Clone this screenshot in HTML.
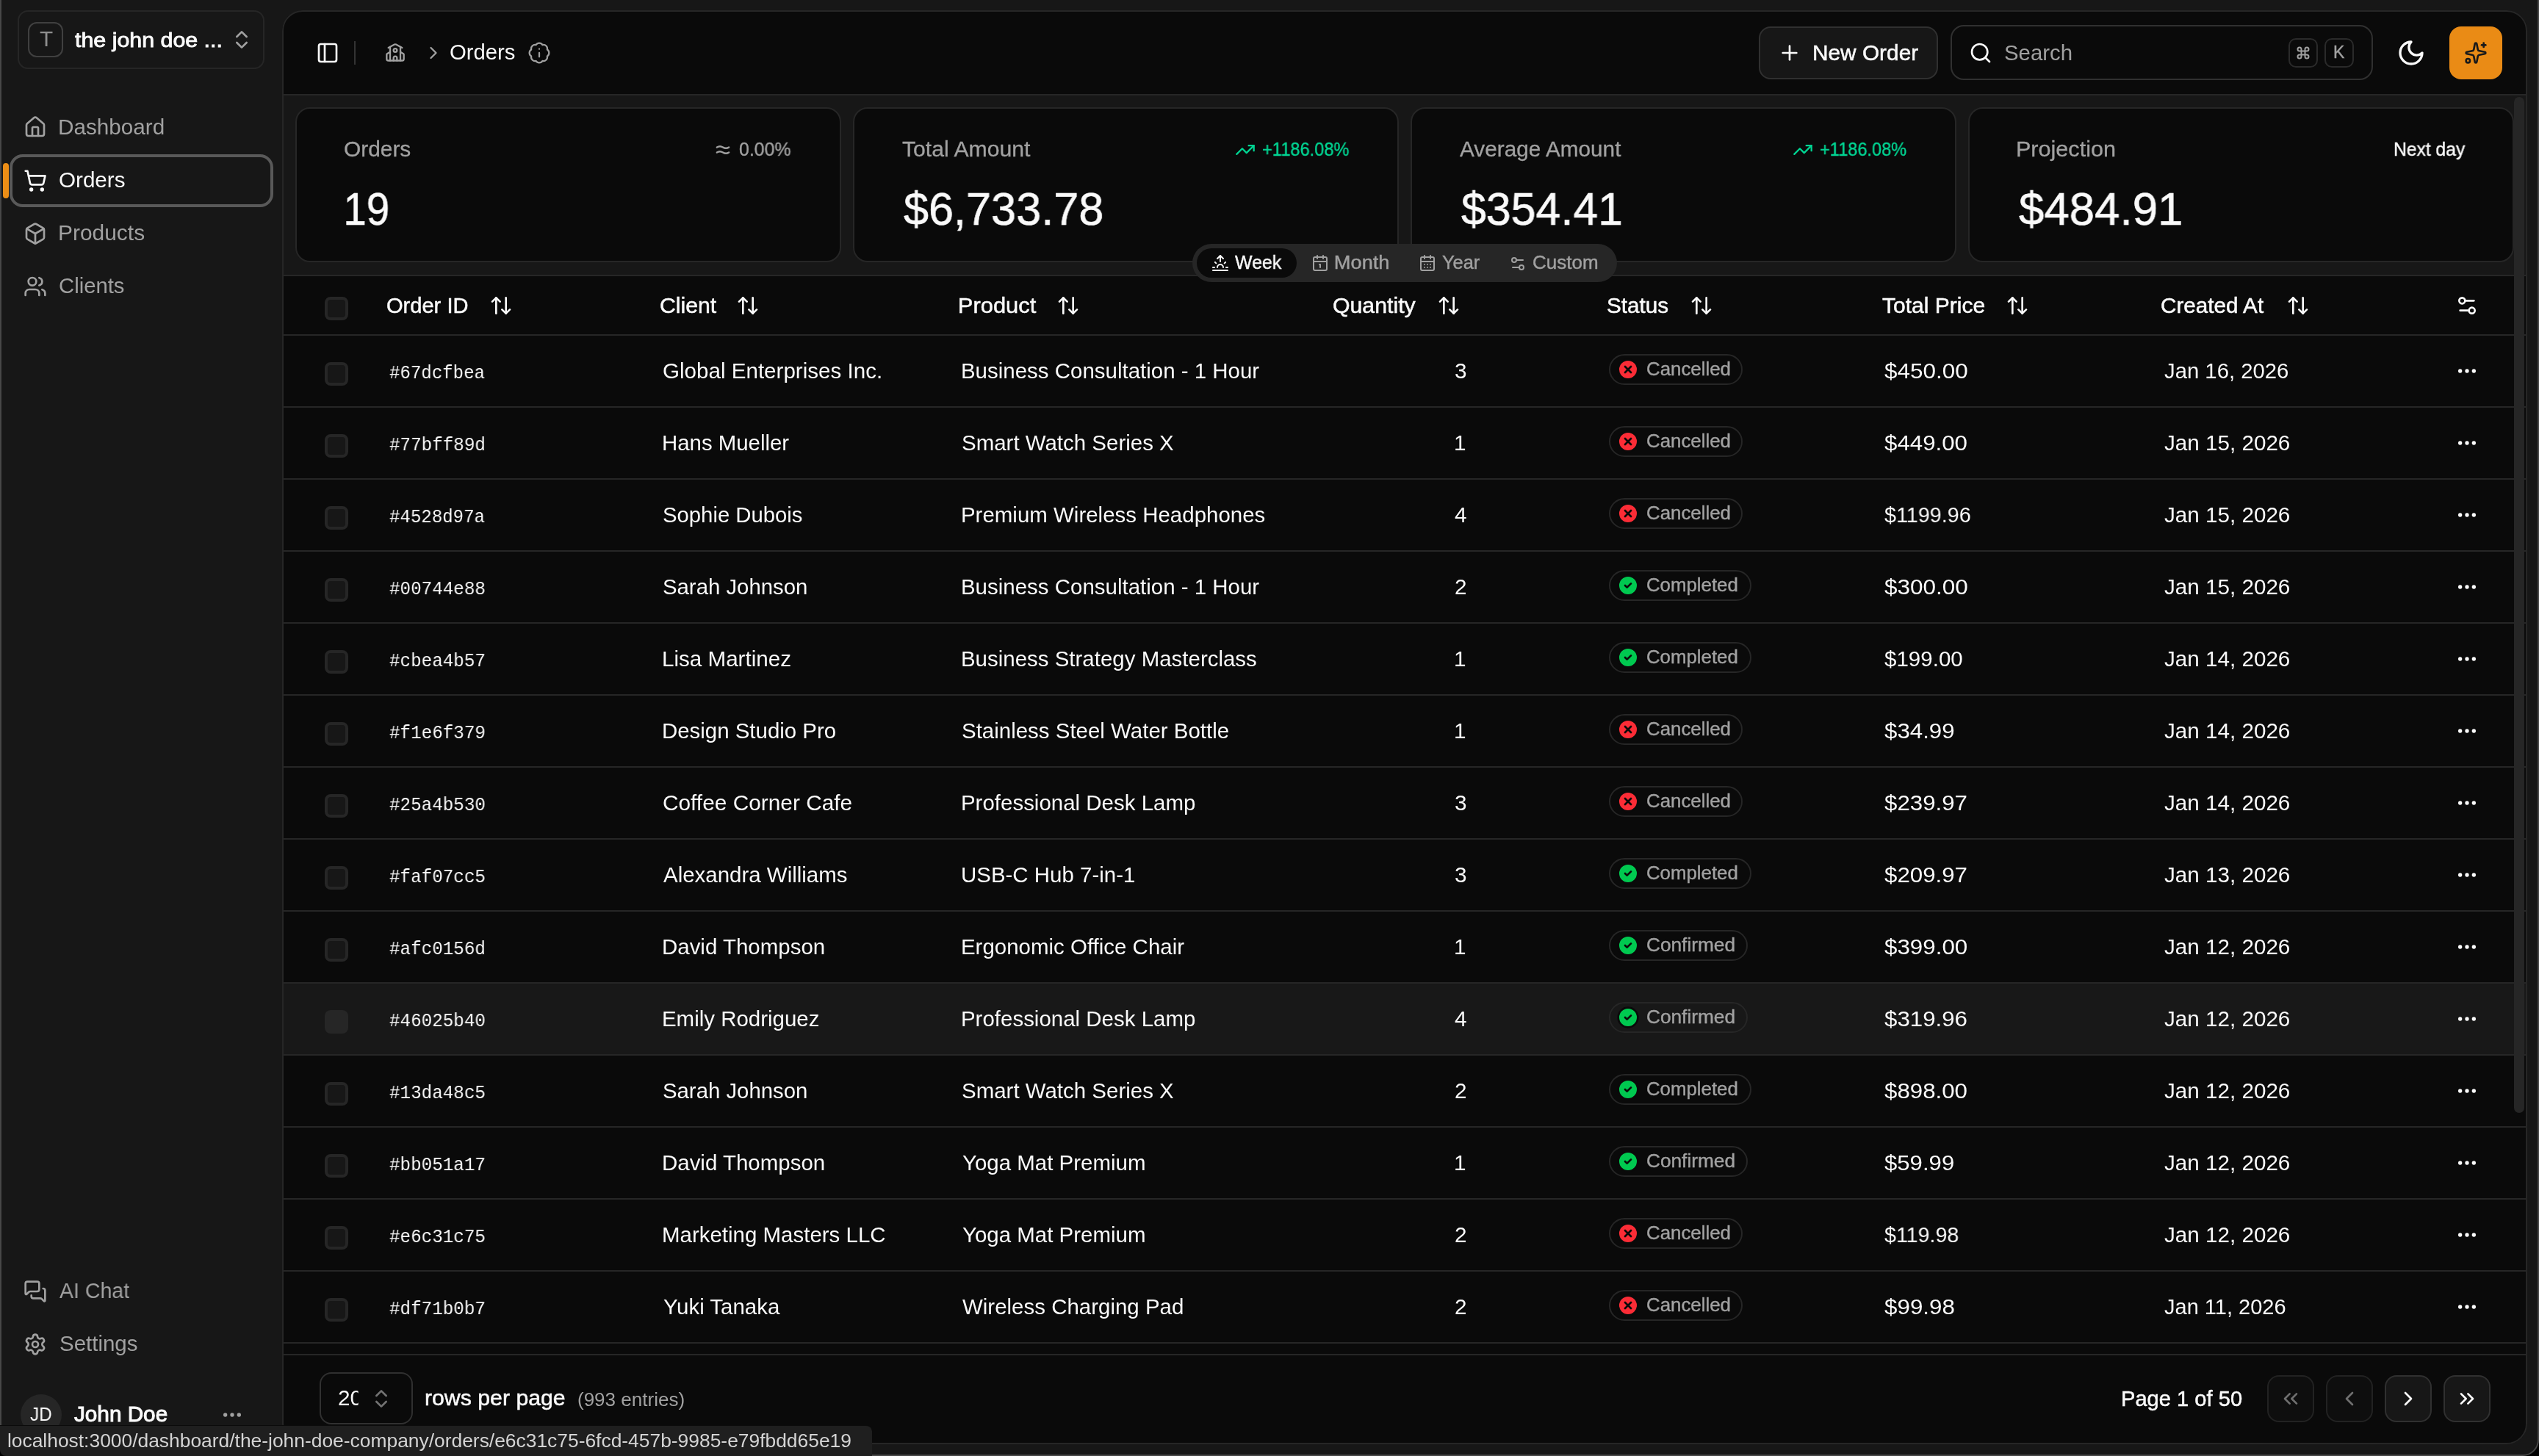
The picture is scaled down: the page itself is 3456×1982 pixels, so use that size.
<!DOCTYPE html>
<html><head><meta charset="utf-8"><title>Orders</title>
<style>
html,body{margin:0;padding:0;}
body{width:3456px;height:1982px;overflow:hidden;position:relative;background:#000;font-family:'Liberation Sans', sans-serif;}
.a{position:absolute;}
.t{white-space:pre;will-change:transform;}
</style></head><body>
<div class="a" style="left:0px;top:-40px;width:3456px;height:2022px;background:#171717;border:2px solid #474747;border-radius:22px;box-sizing:border-box;"></div>
<div class="a" style="left:24px;top:14px;width:336px;height:80px;border:2px solid #262626;border-radius:14px;box-sizing:border-box;"></div>
<div class="a" style="left:38px;top:30px;width:48px;height:48px;border:2px solid #404040;border-radius:12px;box-sizing:border-box;"></div>
<div class="a t" style="left:54.00px;top:39.45px;font-family:'Liberation Sans', sans-serif;font-size:29px;line-height:29px;font-weight:400;color:#8f8f8f;transform:scaleX(1.0243);transform-origin:0.00px 0;">T</div>
<div class="a t" style="left:102.00px;top:40.60px;font-family:'Liberation Sans', sans-serif;font-size:28px;line-height:28px;font-weight:400;color:#fafafa;transform:scaleX(1.0846);transform-origin:0.00px 0;-webkit-text-stroke:0.9px #fafafa;">the john doe ...</div>
<svg class="a" style="left:313px;top:38px;" width="32" height="32" viewBox="0 0 24 24" fill="none" stroke="#a1a1a1" stroke-width="2" stroke-linecap="round" stroke-linejoin="round"><path d="m7 15 5 5 5-5"/><path d="m7 9 5-5 5 5"/></svg>
<div class="a" style="left:13px;top:210px;width:359px;height:72px;border:4px solid #595959;border-radius:18px;box-sizing:border-box;"></div>
<div class="a" style="left:4px;top:222px;width:8px;height:48px;background:#EC8E16;border-radius:4px;box-sizing:border-box;"></div>
<svg class="a" style="left:32px;top:157px;" width="32" height="32" viewBox="0 0 24 24" fill="none" stroke="#a1a1a1" stroke-width="2" stroke-linecap="round" stroke-linejoin="round"><path d="M15 21v-8a1 1 0 0 0-1-1h-4a1 1 0 0 0-1 1v8"/><path d="M3 10a2 2 0 0 1 .709-1.528l7-5.999a2 2 0 0 1 2.582 0l7 5.999A2 2 0 0 1 21 10v9a2 2 0 0 1-2 2H5a2 2 0 0 1-2-2z"/></svg>
<div class="a t" style="left:79.00px;top:159.45px;font-family:'Liberation Sans', sans-serif;font-size:29px;line-height:29px;font-weight:400;color:#a1a1a1;transform:scaleX(1.0235);transform-origin:2.00px 0;">Dashboard</div>
<svg class="a" style="left:32px;top:230px;" width="32" height="32" viewBox="0 0 24 24" fill="none" stroke="#fafafa" stroke-width="2" stroke-linecap="round" stroke-linejoin="round"><circle cx="8" cy="21" r="1"/><circle cx="19" cy="21" r="1"/><path d="M2.05 2.05h2l2.66 12.42a2 2 0 0 0 2 1.58h9.78a2 2 0 0 0 1.95-1.57l1.65-7.43H5.12"/></svg>
<div class="a t" style="left:80.00px;top:231.45px;font-family:'Liberation Sans', sans-serif;font-size:29px;line-height:29px;font-weight:400;color:#fafafa;transform:scaleX(1.0215);transform-origin:1.00px 0;">Orders</div>
<svg class="a" style="left:32px;top:302px;" width="32" height="32" viewBox="0 0 24 24" fill="none" stroke="#a1a1a1" stroke-width="2" stroke-linecap="round" stroke-linejoin="round"><path d="M21 8a2 2 0 0 0-1-1.73l-7-4a2 2 0 0 0-2 0l-7 4A2 2 0 0 0 3 8v8a2 2 0 0 0 1 1.73l7 4a2 2 0 0 0 2 0l7-4A2 2 0 0 0 21 16Z"/><path d="m3.3 7 8.7 5 8.7-5"/><path d="M12 22V12"/></svg>
<div class="a t" style="left:79.40px;top:303.45px;font-family:'Liberation Sans', sans-serif;font-size:29px;line-height:29px;font-weight:400;color:#a1a1a1;transform:scaleX(1.0327);transform-origin:2.00px 0;">Products</div>
<svg class="a" style="left:32px;top:374px;" width="32" height="32" viewBox="0 0 24 24" fill="none" stroke="#a1a1a1" stroke-width="2" stroke-linecap="round" stroke-linejoin="round"><path d="M16 21v-2a4 4 0 0 0-4-4H6a4 4 0 0 0-4 4v2"/><circle cx="9" cy="7" r="4"/><path d="M22 21v-2a4 4 0 0 0-3-3.87"/><path d="M16 3.13a4 4 0 0 1 0 7.75"/></svg>
<div class="a t" style="left:80.40px;top:375.45px;font-family:'Liberation Sans', sans-serif;font-size:29px;line-height:29px;font-weight:400;color:#a1a1a1;transform:scaleX(1.0098);transform-origin:1.00px 0;">Clients</div>
<svg class="a" style="left:32px;top:1742px;" width="32" height="32" viewBox="0 0 24 24" fill="none" stroke="#a1a1a1" stroke-width="2" stroke-linecap="round" stroke-linejoin="round"><path d="M16 10a2 2 0 0 1-2 2H6.828a2 2 0 0 0-1.414.586l-2.202 2.202A.71.71 0 0 1 2 14.286V4a2 2 0 0 1 2-2h10a2 2 0 0 1 2 2z"/><path d="M20 9a2 2 0 0 1 2 2v10.286a.71.71 0 0 1-1.212.502l-2.202-2.202A2 2 0 0 0 17.172 19H10a2 2 0 0 1-2-2v-1"/></svg>
<div class="a t" style="left:81.00px;top:1743.45px;font-family:'Liberation Sans', sans-serif;font-size:29px;line-height:29px;font-weight:400;color:#a1a1a1;transform:scaleX(0.9829);transform-origin:0.00px 0;">AI Chat</div>
<svg class="a" style="left:32px;top:1814px;" width="32" height="32" viewBox="0 0 24 24" fill="none" stroke="#a1a1a1" stroke-width="2" stroke-linecap="round" stroke-linejoin="round"><path d="M9.671 4.136a2.34 2.34 0 0 1 4.659 0 2.34 2.34 0 0 0 3.319 1.915 2.34 2.34 0 0 1 2.33 4.033 2.34 2.34 0 0 0 0 3.831 2.34 2.34 0 0 1-2.33 4.033 2.34 2.34 0 0 0-3.319 1.915 2.34 2.34 0 0 1-4.659 0 2.34 2.34 0 0 0-3.32-1.915 2.34 2.34 0 0 1-2.33-4.033 2.34 2.34 0 0 0 0-3.831A2.34 2.34 0 0 1 6.35 6.051a2.34 2.34 0 0 0 3.319-1.915"/><circle cx="12" cy="12" r="3"/></svg>
<div class="a t" style="left:80.50px;top:1815.45px;font-family:'Liberation Sans', sans-serif;font-size:29px;line-height:29px;font-weight:400;color:#a1a1a1;transform:scaleX(1.0166);transform-origin:1.00px 0;">Settings</div>
<div class="a" style="left:28px;top:1898px;width:56px;height:56px;background:#262626;border-radius:28px;box-sizing:border-box;"></div>
<div class="a t" style="left:41.00px;top:1911.99px;font-family:'Liberation Sans', sans-serif;font-size:26px;line-height:26px;font-weight:400;color:#fafafa;transform:scaleX(0.9355);transform-origin:0.00px 0;">JD</div>
<div class="a t" style="left:101.00px;top:1911.45px;font-family:'Liberation Sans', sans-serif;font-size:29px;line-height:29px;font-weight:400;color:#fafafa;transform:scaleX(1.0243);transform-origin:0.00px 0;-webkit-text-stroke:1.0px #fafafa;">John Doe</div>
<svg class="a" style="left:300px;top:1910px;" width="32" height="32" viewBox="0 0 24 24" fill="none" stroke="#a1a1a1" stroke-width="2" stroke-linecap="round" stroke-linejoin="round"><circle cx="12" cy="12" r="1"/><circle cx="19" cy="12" r="1"/><circle cx="5" cy="12" r="1"/></svg>
<div class="a" style="left:384px;top:14px;width:3056px;height:1952px;background:#0a0a0a;border-radius:28px;box-sizing:border-box;"></div>
<svg class="a" style="left:430px;top:56px;" width="32" height="32" viewBox="0 0 24 24" fill="none" stroke="#fafafa" stroke-width="2" stroke-linecap="round" stroke-linejoin="round"><rect width="18" height="18" x="3" y="3" rx="2"/><path d="M9 3v18"/></svg>
<div class="a" style="left:482px;top:56px;width:2px;height:32px;background:#333333;box-sizing:border-box;"></div>
<svg class="a" style="left:524px;top:58px;" width="28" height="28" viewBox="0 0 24 24" fill="none" stroke="#a1a1a1" stroke-width="2" stroke-linecap="round" stroke-linejoin="round"><path d="M14 21v-3a2 2 0 0 0-4 0v3"/><path d="M18 5v16"/><path d="m4 6 7.106-3.79a2 2 0 0 1 1.788 0L20 6"/><path d="m6 11-3.52 2.147a1 1 0 0 0-.48.854V19a2 2 0 0 0 2 2h16a2 2 0 0 0 2-2v-5a1 1 0 0 0-.48-.853L18 11"/><path d="M6 5v16"/><circle cx="12" cy="9" r="2"/></svg>
<svg class="a" style="left:576px;top:58px;" width="28" height="28" viewBox="0 0 24 24" fill="none" stroke="#a1a1a1" stroke-width="2" stroke-linecap="round" stroke-linejoin="round"><path d="m9 18 6-6-6-6"/></svg>
<div class="a t" style="left:612.40px;top:57.25px;font-family:'Liberation Sans', sans-serif;font-size:29px;line-height:29px;font-weight:400;color:#fafafa;transform:scaleX(1.0100);transform-origin:1.00px 0;">Orders</div>
<svg class="a" style="left:718px;top:56px;" width="32" height="32" viewBox="0 0 24 24" fill="none" stroke="#a1a1a1" stroke-width="1.7" stroke-linecap="round" stroke-linejoin="round"><path d="M3.85 8.62a4 4 0 0 1 4.78-4.77 4 4 0 0 1 6.74 0 4 4 0 0 1 4.78 4.78 4 4 0 0 1 0 6.74 4 4 0 0 1-4.77 4.78 4 4 0 0 1-6.75 0 4 4 0 0 1-4.78-4.77 4 4 0 0 1 0-6.76Z"/><line x1="12" x2="12" y1="16" y2="12"/><line x1="12" x2="12.01" y1="8" y2="8"/></svg>
<div class="a" style="left:2394px;top:36px;width:244px;height:72px;background:#171717;border:2px solid #303030;border-radius:16px;box-sizing:border-box;"></div>
<svg class="a" style="left:2420px;top:56px;" width="32" height="32" viewBox="0 0 24 24" fill="none" stroke="#fafafa" stroke-width="2" stroke-linecap="round" stroke-linejoin="round"><path d="M5 12h14"/><path d="M12 5v14"/></svg>
<div class="a t" style="left:2467.00px;top:57.65px;font-family:'Liberation Sans', sans-serif;font-size:29px;line-height:29px;font-weight:400;color:#fafafa;transform:scaleX(1.0286);transform-origin:2.00px 0;-webkit-text-stroke:0.5px #fafafa;">New Order</div>
<div class="a" style="left:2655px;top:34px;width:575px;height:75px;background:#0a0a0a;border:2px solid #303030;border-radius:18px;box-sizing:border-box;"></div>
<svg class="a" style="left:2680px;top:56px;" width="32" height="32" viewBox="0 0 24 24" fill="none" stroke="#fafafa" stroke-width="2" stroke-linecap="round" stroke-linejoin="round"><path d="m21 21-4.34-4.34"/><circle cx="11" cy="11" r="8"/></svg>
<div class="a t" style="left:2728.00px;top:58.35px;font-family:'Liberation Sans', sans-serif;font-size:29px;line-height:29px;font-weight:400;color:#a1a1a1;transform:scaleX(1.0139);transform-origin:1.00px 0;">Search</div>
<div class="a" style="left:3115px;top:52px;width:40px;height:40px;border:2px solid #2a2a2a;border-radius:10px;box-sizing:border-box;"></div>
<svg class="a" style="left:3125px;top:62px;" width="20" height="20" viewBox="0 0 24 24" fill="none" stroke="#a1a1a1" stroke-width="2.4" stroke-linecap="round" stroke-linejoin="round"><path d="M15 6v12a3 3 0 1 0 3-3H6a3 3 0 1 0 3 3V6a3 3 0 1 0-3 3h12a3 3 0 1 0-3-3"/></svg>
<div class="a" style="left:3164px;top:52px;width:40px;height:40px;border:2px solid #2a2a2a;border-radius:10px;box-sizing:border-box;"></div>
<div class="a t" style="left:3176.00px;top:60.23px;font-family:'Liberation Sans', sans-serif;font-size:23px;line-height:23px;font-weight:400;color:#a1a1a1;-webkit-text-stroke:0.4px #a1a1a1;">K</div>
<svg class="a" style="left:3262px;top:52px;" width="40" height="40" viewBox="0 0 24 24" fill="none" stroke="#fafafa" stroke-width="2" stroke-linecap="round" stroke-linejoin="round"><path d="M12 3a6 6 0 0 0 9 9 9 9 0 1 1-9-9Z"/></svg>
<div class="a" style="left:3334px;top:36px;width:72px;height:72px;background:#EA8B15;border-radius:16px;box-sizing:border-box;"></div>
<svg class="a" style="left:3354px;top:56px;" width="32" height="32" viewBox="0 0 24 24" fill="none" stroke="#1a1a1a" stroke-width="2" stroke-linecap="round" stroke-linejoin="round"><path d="M11.017 2.814a1 1 0 0 1 1.966 0l1.051 5.558a2 2 0 0 0 1.594 1.594l5.558 1.051a1 1 0 0 1 0 1.966l-5.558 1.051a2 2 0 0 0-1.594 1.594l-1.051 5.558a1 1 0 0 1-1.966 0l-1.051-5.558a2 2 0 0 0-1.594-1.594l-5.558-1.051a1 1 0 0 1 0-1.966l5.558-1.051a2 2 0 0 0 1.594-1.594z"/><path d="M20 2v4"/><path d="M22 4h-4"/><circle cx="4" cy="20" r="2"/></svg>
<div class="a" style="left:386px;top:128px;width:3052px;height:2px;background:#262626;box-sizing:border-box;"></div>
<div class="a" style="left:386px;top:130px;width:3052px;height:244px;background:#171717;box-sizing:border-box;"></div>
<div class="a" style="left:386px;top:374px;width:3052px;height:2px;background:#262626;box-sizing:border-box;"></div>
<div class="a" style="left:402px;top:146px;width:743px;height:211px;background:#0a0a0a;border:2px solid #262626;border-radius:20px;box-sizing:border-box;"></div>
<div class="a" style="left:1161px;top:146px;width:743px;height:211px;background:#0a0a0a;border:2px solid #262626;border-radius:20px;box-sizing:border-box;"></div>
<div class="a" style="left:1920px;top:146px;width:743px;height:211px;background:#0a0a0a;border:2px solid #262626;border-radius:20px;box-sizing:border-box;"></div>
<div class="a" style="left:2679px;top:146px;width:743px;height:211px;background:#0a0a0a;border:2px solid #262626;border-radius:20px;box-sizing:border-box;"></div>
<div class="a t" style="left:467.50px;top:189.45px;font-family:'Liberation Sans', sans-serif;font-size:29px;line-height:29px;font-weight:400;color:#a1a1a1;transform:scaleX(1.0307);transform-origin:1.00px 0;-webkit-text-stroke:0.3px #a1a1a1;">Orders</div>
<div class="a t" style="left:466.50px;top:252.67px;font-family:'Liberation Sans', sans-serif;font-size:63px;line-height:63px;font-weight:400;color:#fafafa;transform:scaleX(0.8963);transform-origin:4.00px 0;-webkit-text-stroke:0.6px #fafafa;">19</div>
<div class="a t" style="left:1227.50px;top:189.45px;font-family:'Liberation Sans', sans-serif;font-size:29px;line-height:29px;font-weight:400;color:#a1a1a1;transform:scaleX(1.0402);transform-origin:0.00px 0;-webkit-text-stroke:0.3px #a1a1a1;">Total Amount</div>
<div class="a t" style="left:1229.50px;top:252.67px;font-family:'Liberation Sans', sans-serif;font-size:63px;line-height:63px;font-weight:400;color:#fafafa;transform:scaleX(0.9715);transform-origin:0.00px 0;-webkit-text-stroke:0.6px #fafafa;">$6,733.78</div>
<div class="a t" style="left:1986.50px;top:189.45px;font-family:'Liberation Sans', sans-serif;font-size:29px;line-height:29px;font-weight:400;color:#a1a1a1;transform:scaleX(1.0258);transform-origin:0.00px 0;-webkit-text-stroke:0.3px #a1a1a1;">Average Amount</div>
<div class="a t" style="left:1988.50px;top:252.67px;font-family:'Liberation Sans', sans-serif;font-size:63px;line-height:63px;font-weight:400;color:#fafafa;transform:scaleX(0.9658);transform-origin:0.00px 0;-webkit-text-stroke:0.6px #fafafa;">$354.41</div>
<div class="a t" style="left:2743.50px;top:189.45px;font-family:'Liberation Sans', sans-serif;font-size:29px;line-height:29px;font-weight:400;color:#a1a1a1;transform:scaleX(1.0554);transform-origin:2.00px 0;-webkit-text-stroke:0.3px #a1a1a1;">Projection</div>
<div class="a t" style="left:2747.50px;top:252.67px;font-family:'Liberation Sans', sans-serif;font-size:63px;line-height:63px;font-weight:400;color:#fafafa;transform:scaleX(0.9809);transform-origin:0.00px 0;-webkit-text-stroke:0.6px #fafafa;">$484.91</div>
<svg class="a" style="left:969.5px;top:190px;" width="28" height="28" viewBox="0 0 24 24" fill="none" stroke="#a1a1a1" stroke-width="2" stroke-linecap="round" stroke-linejoin="round"><path d="M5 15a6.5 6.5 0 0 1 7 0 6.5 6.5 0 0 0 7 0"/><path d="M5 9a6.5 6.5 0 0 1 7 0 6.5 6.5 0 0 0 7 0"/></svg>
<div class="a t" style="left:1006.30px;top:191.44px;font-family:'Liberation Sans', sans-serif;font-size:25px;line-height:25px;font-weight:400;color:#a1a1a1;transform:scaleX(0.9935);transform-origin:0.00px 0;-webkit-text-stroke:0.4px #a1a1a1;">0.00%</div>
<svg class="a" style="left:1681px;top:190px;" width="28" height="28" viewBox="0 0 24 24" fill="none" stroke="#00d492" stroke-width="2" stroke-linecap="round" stroke-linejoin="round"><path d="M16 7h6v6"/><path d="m22 7-8.5 8.5-5-5L2 17"/></svg>
<div class="a t" style="left:1717.70px;top:191.34px;font-family:'Liberation Sans', sans-serif;font-size:25px;line-height:25px;font-weight:400;color:#00d492;transform:scaleX(0.9451);transform-origin:1.00px 0;-webkit-text-stroke:0.4px #00d492;">+1186.08%</div>
<svg class="a" style="left:2440px;top:190px;" width="28" height="28" viewBox="0 0 24 24" fill="none" stroke="#00d492" stroke-width="2" stroke-linecap="round" stroke-linejoin="round"><path d="M16 7h6v6"/><path d="m22 7-8.5 8.5-5-5L2 17"/></svg>
<div class="a t" style="left:2477.40px;top:191.34px;font-family:'Liberation Sans', sans-serif;font-size:25px;line-height:25px;font-weight:400;color:#00d492;transform:scaleX(0.9427);transform-origin:1.00px 0;-webkit-text-stroke:0.4px #00d492;">+1186.08%</div>
<div class="a t" style="left:3257.80px;top:190.84px;font-family:'Liberation Sans', sans-serif;font-size:25px;line-height:25px;font-weight:400;color:#fafafa;transform:scaleX(0.9850);transform-origin:2.00px 0;-webkit-text-stroke:0.4px #fafafa;">Next day</div>
<div class="a" style="left:1623px;top:332px;width:578px;height:52px;background:#262626;border-radius:26px;box-sizing:border-box;"></div>
<div class="a" style="left:1629px;top:338px;width:136px;height:40px;background:#0a0a0a;border-radius:20px;box-sizing:border-box;"></div>
<svg class="a" style="left:1649px;top:346px;" width="24" height="24" viewBox="0 0 24 24" fill="none" stroke="#fafafa" stroke-width="2" stroke-linecap="round" stroke-linejoin="round"><path d="M12 2v8"/><path d="m4.93 10.93 1.41 1.41"/><path d="M2 18h2"/><path d="M20 18h2"/><path d="m19.07 10.93-1.41 1.41"/><path d="M22 22H2"/><path d="m8 6 4-4 4 4"/><path d="M16 18a4 4 0 0 0-8 0"/></svg>
<div class="a t" style="left:1681.00px;top:344.84px;font-family:'Liberation Sans', sans-serif;font-size:25px;line-height:25px;font-weight:400;color:#fafafa;transform:scaleX(0.9961);transform-origin:0.00px 0;-webkit-text-stroke:0.4px #fafafa;">Week</div>
<svg class="a" style="left:1784.5px;top:346px;" width="24" height="24" viewBox="0 0 24 24" fill="none" stroke="#a1a1a1" stroke-width="2" stroke-linecap="round" stroke-linejoin="round"><path d="M11 14h1v4"/><path d="M16 2v4"/><path d="M3 10h18"/><path d="M8 2v4"/><rect x="3" y="4" width="18" height="18" rx="2"/></svg>
<div class="a t" style="left:1815.50px;top:344.84px;font-family:'Liberation Sans', sans-serif;font-size:25px;line-height:25px;font-weight:400;color:#a1a1a1;transform:scaleX(1.0889);transform-origin:2.00px 0;-webkit-text-stroke:0.4px #a1a1a1;">Month</div>
<svg class="a" style="left:1930.5px;top:346px;" width="24" height="24" viewBox="0 0 24 24" fill="none" stroke="#a1a1a1" stroke-width="2" stroke-linecap="round" stroke-linejoin="round"><path d="M8 2v4"/><path d="M16 2v4"/><rect width="18" height="18" x="3" y="4" rx="2"/><path d="M3 10h18"/><path d="M8 14h.01"/><path d="M12 14h.01"/><path d="M16 14h.01"/><path d="M8 18h.01"/><path d="M12 18h.01"/><path d="M16 18h.01"/></svg>
<div class="a t" style="left:1963.00px;top:344.84px;font-family:'Liberation Sans', sans-serif;font-size:25px;line-height:25px;font-weight:400;color:#a1a1a1;transform:scaleX(1.0162);transform-origin:0.00px 0;-webkit-text-stroke:0.4px #a1a1a1;">Year</div>
<svg class="a" style="left:2054px;top:346.5px;" width="24" height="24" viewBox="0 0 24 24" fill="none" stroke="#a1a1a1" stroke-width="2" stroke-linecap="round" stroke-linejoin="round"><path d="M14 17H5"/><path d="M19 7h-9"/><circle cx="17" cy="17" r="3"/><circle cx="7" cy="7" r="3"/></svg>
<div class="a t" style="left:2086.00px;top:344.84px;font-family:'Liberation Sans', sans-serif;font-size:25px;line-height:25px;font-weight:400;color:#a1a1a1;transform:scaleX(1.0402);transform-origin:1.00px 0;-webkit-text-stroke:0.4px #a1a1a1;">Custom</div>
<div class="a" style="left:442px;top:404px;width:32px;height:32px;background:#171717;border:4px solid #262626;border-radius:8px;box-sizing:border-box;"></div>
<div class="a t" style="left:526.00px;top:401.95px;font-family:'Liberation Sans', sans-serif;font-size:29px;line-height:29px;font-weight:400;color:#fafafa;transform:scaleX(1.0024);transform-origin:1.00px 0;-webkit-text-stroke:0.5px #fafafa;">Order ID</div>
<svg class="a" style="left:666px;top:400px;" width="32" height="32" viewBox="0 0 24 24" fill="none" stroke="#fafafa" stroke-width="2" stroke-linecap="round" stroke-linejoin="round"><path d="m21 16-4 4-4-4"/><path d="M17 20V4"/><path d="m3 8 4-4 4 4"/><path d="M7 4v16"/></svg>
<div class="a t" style="left:898.00px;top:401.95px;font-family:'Liberation Sans', sans-serif;font-size:29px;line-height:29px;font-weight:400;color:#fafafa;transform:scaleX(1.0399);transform-origin:1.00px 0;-webkit-text-stroke:0.5px #fafafa;">Client</div>
<svg class="a" style="left:1002.3px;top:400px;" width="32" height="32" viewBox="0 0 24 24" fill="none" stroke="#fafafa" stroke-width="2" stroke-linecap="round" stroke-linejoin="round"><path d="m21 16-4 4-4-4"/><path d="M17 20V4"/><path d="m3 8 4-4 4 4"/><path d="M7 4v16"/></svg>
<div class="a t" style="left:1303.60px;top:401.95px;font-family:'Liberation Sans', sans-serif;font-size:29px;line-height:29px;font-weight:400;color:#fafafa;transform:scaleX(1.0645);transform-origin:2.00px 0;-webkit-text-stroke:0.5px #fafafa;">Product</div>
<svg class="a" style="left:1438px;top:400px;" width="32" height="32" viewBox="0 0 24 24" fill="none" stroke="#fafafa" stroke-width="2" stroke-linecap="round" stroke-linejoin="round"><path d="m21 16-4 4-4-4"/><path d="M17 20V4"/><path d="m3 8 4-4 4 4"/><path d="M7 4v16"/></svg>
<div class="a t" style="left:1813.80px;top:401.95px;font-family:'Liberation Sans', sans-serif;font-size:29px;line-height:29px;font-weight:400;color:#fafafa;transform:scaleX(1.0437);transform-origin:1.00px 0;-webkit-text-stroke:0.5px #fafafa;">Quantity</div>
<svg class="a" style="left:1956px;top:400px;" width="32" height="32" viewBox="0 0 24 24" fill="none" stroke="#fafafa" stroke-width="2" stroke-linecap="round" stroke-linejoin="round"><path d="m21 16-4 4-4-4"/><path d="M17 20V4"/><path d="m3 8 4-4 4 4"/><path d="M7 4v16"/></svg>
<div class="a t" style="left:2186.50px;top:401.95px;font-family:'Liberation Sans', sans-serif;font-size:29px;line-height:29px;font-weight:400;color:#fafafa;transform:scaleX(1.0221);transform-origin:1.00px 0;-webkit-text-stroke:0.5px #fafafa;">Status</div>
<svg class="a" style="left:2300px;top:400px;" width="32" height="32" viewBox="0 0 24 24" fill="none" stroke="#fafafa" stroke-width="2" stroke-linecap="round" stroke-linejoin="round"><path d="m21 16-4 4-4-4"/><path d="M17 20V4"/><path d="m3 8 4-4 4 4"/><path d="M7 4v16"/></svg>
<div class="a t" style="left:2561.60px;top:401.95px;font-family:'Liberation Sans', sans-serif;font-size:29px;line-height:29px;font-weight:400;color:#fafafa;transform:scaleX(1.0353);transform-origin:0.00px 0;-webkit-text-stroke:0.5px #fafafa;">Total Price</div>
<svg class="a" style="left:2730.3px;top:400px;" width="32" height="32" viewBox="0 0 24 24" fill="none" stroke="#fafafa" stroke-width="2" stroke-linecap="round" stroke-linejoin="round"><path d="m21 16-4 4-4-4"/><path d="M17 20V4"/><path d="m3 8 4-4 4 4"/><path d="M7 4v16"/></svg>
<div class="a t" style="left:2941.00px;top:401.95px;font-family:'Liberation Sans', sans-serif;font-size:29px;line-height:29px;font-weight:400;color:#fafafa;transform:scaleX(1.0227);transform-origin:1.00px 0;-webkit-text-stroke:0.5px #fafafa;">Created At</div>
<svg class="a" style="left:3112.3px;top:400px;" width="32" height="32" viewBox="0 0 24 24" fill="none" stroke="#fafafa" stroke-width="2" stroke-linecap="round" stroke-linejoin="round"><path d="m21 16-4 4-4-4"/><path d="M17 20V4"/><path d="m3 8 4-4 4 4"/><path d="M7 4v16"/></svg>
<svg class="a" style="left:3342px;top:400px;" width="32" height="32" viewBox="0 0 24 24" fill="none" stroke="#fafafa" stroke-width="2" stroke-linecap="round" stroke-linejoin="round"><path d="M14 17H5"/><path d="M19 7h-9"/><circle cx="17" cy="17" r="3"/><circle cx="7" cy="7" r="3"/></svg>
<div class="a" style="left:386px;top:455px;width:3052px;height:2px;background:#262626;box-sizing:border-box;"></div>
<div class="a" style="left:442px;top:493px;width:32px;height:32px;background:#171717;border:4px solid #262626;border-radius:8px;box-sizing:border-box;"></div>
<div class="a t" style="left:529.70px;top:495.37px;font-family:'Liberation Mono', monospace;font-size:26px;line-height:26px;font-weight:400;color:#fafafa;transform:scaleX(0.9255);transform-origin:0.00px 0;">#67dcfbea</div>
<div class="a t" style="left:902.30px;top:490.75px;font-family:'Liberation Sans', sans-serif;font-size:29px;line-height:29px;font-weight:400;color:#fafafa;transform:scaleX(1.0200);transform-origin:1.00px 0;">Global Enterprises Inc.</div>
<div class="a t" style="left:1307.70px;top:490.75px;font-family:'Liberation Sans', sans-serif;font-size:29px;line-height:29px;font-weight:400;color:#fafafa;transform:scaleX(1.0161);transform-origin:2.00px 0;">Business Consultation - 1 Hour</div>
<div class="a t" style="left:1979.83px;top:490.75px;font-family:'Liberation Sans', sans-serif;font-size:29px;line-height:29px;font-weight:400;color:#fafafa;transform:scaleX(1.0243);transform-origin:1.00px 0;">3</div>
<div class="a" style="left:2190px;top:482px;width:182px;height:42px;border:2px solid #262626;border-radius:21px;box-sizing:border-box;"></div>
<svg class="a" style="left:2200px;top:487.3px;" width="32" height="32" viewBox="0 0 24 24" fill="#fb2c36" stroke="#0a0a0a" stroke-width="2" stroke-linecap="round" stroke-linejoin="round"><circle cx="12" cy="12" r="10"/><path d="m15 9-6 6"/><path d="m9 9 6 6"/></svg>
<div class="a t" style="left:2240.50px;top:490.04px;font-family:'Liberation Sans', sans-serif;font-size:25px;line-height:25px;font-weight:400;color:#a1a1a1;transform:scaleX(1.0341);transform-origin:1.00px 0;-webkit-text-stroke:0.4px #a1a1a1;">Cancelled</div>
<div class="a t" style="left:2565.00px;top:490.75px;font-family:'Liberation Sans', sans-serif;font-size:29px;line-height:29px;font-weight:400;color:#fafafa;transform:scaleX(1.0839);transform-origin:0.00px 0;">$450.00</div>
<div class="a t" style="left:2946.00px;top:490.75px;font-family:'Liberation Sans', sans-serif;font-size:29px;line-height:29px;font-weight:400;color:#fafafa;transform:scaleX(1.0098);transform-origin:0.00px 0;">Jan 16, 2026</div>
<svg class="a" style="left:3342px;top:489px;" width="32" height="32" viewBox="0 0 24 24" fill="none" stroke="#fafafa" stroke-width="2" stroke-linecap="round" stroke-linejoin="round"><circle cx="12" cy="12" r="1"/><circle cx="19" cy="12" r="1"/><circle cx="5" cy="12" r="1"/></svg>
<div class="a" style="left:386px;top:553px;width:3052px;height:2px;background:#262626;box-sizing:border-box;"></div>
<div class="a" style="left:442px;top:591px;width:32px;height:32px;background:#171717;border:4px solid #262626;border-radius:8px;box-sizing:border-box;"></div>
<div class="a t" style="left:529.70px;top:593.37px;font-family:'Liberation Mono', monospace;font-size:26px;line-height:26px;font-weight:400;color:#fafafa;transform:scaleX(0.9321);transform-origin:0.00px 0;">#77bff89d</div>
<div class="a t" style="left:901.30px;top:588.75px;font-family:'Liberation Sans', sans-serif;font-size:29px;line-height:29px;font-weight:400;color:#fafafa;transform:scaleX(1.0137);transform-origin:2.00px 0;">Hans Mueller</div>
<div class="a t" style="left:1308.70px;top:588.75px;font-family:'Liberation Sans', sans-serif;font-size:29px;line-height:29px;font-weight:400;color:#fafafa;transform:scaleX(1.0161);transform-origin:1.00px 0;">Smart Watch Series X</div>
<div class="a t" style="left:1979.34px;top:588.75px;font-family:'Liberation Sans', sans-serif;font-size:29px;line-height:29px;font-weight:400;color:#fafafa;transform:scaleX(1.0243);transform-origin:2.00px 0;">1</div>
<div class="a" style="left:2190px;top:580px;width:182px;height:42px;border:2px solid #262626;border-radius:21px;box-sizing:border-box;"></div>
<svg class="a" style="left:2200px;top:585.3px;" width="32" height="32" viewBox="0 0 24 24" fill="#fb2c36" stroke="#0a0a0a" stroke-width="2" stroke-linecap="round" stroke-linejoin="round"><circle cx="12" cy="12" r="10"/><path d="m15 9-6 6"/><path d="m9 9 6 6"/></svg>
<div class="a t" style="left:2240.50px;top:588.04px;font-family:'Liberation Sans', sans-serif;font-size:25px;line-height:25px;font-weight:400;color:#a1a1a1;transform:scaleX(1.0341);transform-origin:1.00px 0;-webkit-text-stroke:0.4px #a1a1a1;">Cancelled</div>
<div class="a t" style="left:2565.00px;top:588.75px;font-family:'Liberation Sans', sans-serif;font-size:29px;line-height:29px;font-weight:400;color:#fafafa;transform:scaleX(1.0780);transform-origin:0.00px 0;">$449.00</div>
<div class="a t" style="left:2946.00px;top:588.75px;font-family:'Liberation Sans', sans-serif;font-size:29px;line-height:29px;font-weight:400;color:#fafafa;transform:scaleX(1.0218);transform-origin:0.00px 0;">Jan 15, 2026</div>
<svg class="a" style="left:3342px;top:587px;" width="32" height="32" viewBox="0 0 24 24" fill="none" stroke="#fafafa" stroke-width="2" stroke-linecap="round" stroke-linejoin="round"><circle cx="12" cy="12" r="1"/><circle cx="19" cy="12" r="1"/><circle cx="5" cy="12" r="1"/></svg>
<div class="a" style="left:386px;top:651px;width:3052px;height:2px;background:#262626;box-sizing:border-box;"></div>
<div class="a" style="left:442px;top:689px;width:32px;height:32px;background:#171717;border:4px solid #262626;border-radius:8px;box-sizing:border-box;"></div>
<div class="a t" style="left:529.70px;top:691.37px;font-family:'Liberation Mono', monospace;font-size:26px;line-height:26px;font-weight:400;color:#fafafa;transform:scaleX(0.9255);transform-origin:0.00px 0;">#4528d97a</div>
<div class="a t" style="left:902.30px;top:686.75px;font-family:'Liberation Sans', sans-serif;font-size:29px;line-height:29px;font-weight:400;color:#fafafa;transform:scaleX(1.0100);transform-origin:1.00px 0;">Sophie Dubois</div>
<div class="a t" style="left:1307.70px;top:686.75px;font-family:'Liberation Sans', sans-serif;font-size:29px;line-height:29px;font-weight:400;color:#fafafa;transform:scaleX(1.0161);transform-origin:2.00px 0;">Premium Wireless Headphones</div>
<div class="a t" style="left:1979.81px;top:686.75px;font-family:'Liberation Sans', sans-serif;font-size:29px;line-height:29px;font-weight:400;color:#fafafa;transform:scaleX(1.0243);transform-origin:0.00px 0;">4</div>
<div class="a" style="left:2190px;top:678px;width:182px;height:42px;border:2px solid #262626;border-radius:21px;box-sizing:border-box;"></div>
<svg class="a" style="left:2200px;top:683.3px;" width="32" height="32" viewBox="0 0 24 24" fill="#fb2c36" stroke="#0a0a0a" stroke-width="2" stroke-linecap="round" stroke-linejoin="round"><circle cx="12" cy="12" r="10"/><path d="m15 9-6 6"/><path d="m9 9 6 6"/></svg>
<div class="a t" style="left:2240.50px;top:686.04px;font-family:'Liberation Sans', sans-serif;font-size:25px;line-height:25px;font-weight:400;color:#a1a1a1;transform:scaleX(1.0341);transform-origin:1.00px 0;-webkit-text-stroke:0.4px #a1a1a1;">Cancelled</div>
<div class="a t" style="left:2565.00px;top:686.75px;font-family:'Liberation Sans', sans-serif;font-size:29px;line-height:29px;font-weight:400;color:#fafafa;transform:scaleX(0.9909);transform-origin:0.00px 0;">$1199.96</div>
<div class="a t" style="left:2946.00px;top:686.75px;font-family:'Liberation Sans', sans-serif;font-size:29px;line-height:29px;font-weight:400;color:#fafafa;transform:scaleX(1.0218);transform-origin:0.00px 0;">Jan 15, 2026</div>
<svg class="a" style="left:3342px;top:685px;" width="32" height="32" viewBox="0 0 24 24" fill="none" stroke="#fafafa" stroke-width="2" stroke-linecap="round" stroke-linejoin="round"><circle cx="12" cy="12" r="1"/><circle cx="19" cy="12" r="1"/><circle cx="5" cy="12" r="1"/></svg>
<div class="a" style="left:386px;top:749px;width:3052px;height:2px;background:#262626;box-sizing:border-box;"></div>
<div class="a" style="left:442px;top:787px;width:32px;height:32px;background:#171717;border:4px solid #262626;border-radius:8px;box-sizing:border-box;"></div>
<div class="a t" style="left:529.70px;top:789.37px;font-family:'Liberation Mono', monospace;font-size:26px;line-height:26px;font-weight:400;color:#fafafa;transform:scaleX(0.9321);transform-origin:0.00px 0;">#00744e88</div>
<div class="a t" style="left:902.30px;top:784.75px;font-family:'Liberation Sans', sans-serif;font-size:29px;line-height:29px;font-weight:400;color:#fafafa;transform:scaleX(1.0116);transform-origin:1.00px 0;">Sarah Johnson</div>
<div class="a t" style="left:1307.70px;top:784.75px;font-family:'Liberation Sans', sans-serif;font-size:29px;line-height:29px;font-weight:400;color:#fafafa;transform:scaleX(1.0161);transform-origin:2.00px 0;">Business Consultation - 1 Hour</div>
<div class="a t" style="left:1979.83px;top:784.75px;font-family:'Liberation Sans', sans-serif;font-size:29px;line-height:29px;font-weight:400;color:#fafafa;transform:scaleX(1.0243);transform-origin:1.00px 0;">2</div>
<div class="a" style="left:2190px;top:776px;width:194px;height:42px;border:2px solid #262626;border-radius:21px;box-sizing:border-box;"></div>
<svg class="a" style="left:2200px;top:781.3px;" width="32" height="32" viewBox="0 0 24 24" fill="#00c950" stroke="#0a0a0a" stroke-width="2" stroke-linecap="round" stroke-linejoin="round"><circle cx="12" cy="12" r="10"/><path d="m9 12 2 2 4-4"/></svg>
<div class="a t" style="left:2240.50px;top:784.04px;font-family:'Liberation Sans', sans-serif;font-size:25px;line-height:25px;font-weight:400;color:#a1a1a1;transform:scaleX(1.0328);transform-origin:1.00px 0;-webkit-text-stroke:0.4px #a1a1a1;">Completed</div>
<div class="a t" style="left:2565.00px;top:784.75px;font-family:'Liberation Sans', sans-serif;font-size:29px;line-height:29px;font-weight:400;color:#fafafa;transform:scaleX(1.0858);transform-origin:0.00px 0;">$300.00</div>
<div class="a t" style="left:2946.00px;top:784.75px;font-family:'Liberation Sans', sans-serif;font-size:29px;line-height:29px;font-weight:400;color:#fafafa;transform:scaleX(1.0218);transform-origin:0.00px 0;">Jan 15, 2026</div>
<svg class="a" style="left:3342px;top:783px;" width="32" height="32" viewBox="0 0 24 24" fill="none" stroke="#fafafa" stroke-width="2" stroke-linecap="round" stroke-linejoin="round"><circle cx="12" cy="12" r="1"/><circle cx="19" cy="12" r="1"/><circle cx="5" cy="12" r="1"/></svg>
<div class="a" style="left:386px;top:847px;width:3052px;height:2px;background:#262626;box-sizing:border-box;"></div>
<div class="a" style="left:442px;top:885px;width:32px;height:32px;background:#171717;border:4px solid #262626;border-radius:8px;box-sizing:border-box;"></div>
<div class="a t" style="left:529.70px;top:887.37px;font-family:'Liberation Mono', monospace;font-size:26px;line-height:26px;font-weight:400;color:#fafafa;transform:scaleX(0.9321);transform-origin:0.00px 0;">#cbea4b57</div>
<div class="a t" style="left:901.30px;top:882.75px;font-family:'Liberation Sans', sans-serif;font-size:29px;line-height:29px;font-weight:400;color:#fafafa;transform:scaleX(1.0208);transform-origin:2.00px 0;">Lisa Martinez</div>
<div class="a t" style="left:1307.70px;top:882.75px;font-family:'Liberation Sans', sans-serif;font-size:29px;line-height:29px;font-weight:400;color:#fafafa;transform:scaleX(1.0161);transform-origin:2.00px 0;">Business Strategy Masterclass</div>
<div class="a t" style="left:1979.34px;top:882.75px;font-family:'Liberation Sans', sans-serif;font-size:29px;line-height:29px;font-weight:400;color:#fafafa;transform:scaleX(1.0243);transform-origin:2.00px 0;">1</div>
<div class="a" style="left:2190px;top:874px;width:194px;height:42px;border:2px solid #262626;border-radius:21px;box-sizing:border-box;"></div>
<svg class="a" style="left:2200px;top:879.3px;" width="32" height="32" viewBox="0 0 24 24" fill="#00c950" stroke="#0a0a0a" stroke-width="2" stroke-linecap="round" stroke-linejoin="round"><circle cx="12" cy="12" r="10"/><path d="m9 12 2 2 4-4"/></svg>
<div class="a t" style="left:2240.50px;top:882.04px;font-family:'Liberation Sans', sans-serif;font-size:25px;line-height:25px;font-weight:400;color:#a1a1a1;transform:scaleX(1.0328);transform-origin:1.00px 0;-webkit-text-stroke:0.4px #a1a1a1;">Completed</div>
<div class="a t" style="left:2565.00px;top:882.75px;font-family:'Liberation Sans', sans-serif;font-size:29px;line-height:29px;font-weight:400;color:#fafafa;transform:scaleX(1.0183);transform-origin:0.00px 0;">$199.00</div>
<div class="a t" style="left:2946.00px;top:882.75px;font-family:'Liberation Sans', sans-serif;font-size:29px;line-height:29px;font-weight:400;color:#fafafa;transform:scaleX(1.0218);transform-origin:0.00px 0;">Jan 14, 2026</div>
<svg class="a" style="left:3342px;top:881px;" width="32" height="32" viewBox="0 0 24 24" fill="none" stroke="#fafafa" stroke-width="2" stroke-linecap="round" stroke-linejoin="round"><circle cx="12" cy="12" r="1"/><circle cx="19" cy="12" r="1"/><circle cx="5" cy="12" r="1"/></svg>
<div class="a" style="left:386px;top:945px;width:3052px;height:2px;background:#262626;box-sizing:border-box;"></div>
<div class="a" style="left:442px;top:983px;width:32px;height:32px;background:#171717;border:4px solid #262626;border-radius:8px;box-sizing:border-box;"></div>
<div class="a t" style="left:529.70px;top:985.37px;font-family:'Liberation Mono', monospace;font-size:26px;line-height:26px;font-weight:400;color:#fafafa;transform:scaleX(0.9321);transform-origin:0.00px 0;">#f1e6f379</div>
<div class="a t" style="left:901.30px;top:980.75px;font-family:'Liberation Sans', sans-serif;font-size:29px;line-height:29px;font-weight:400;color:#fafafa;transform:scaleX(1.0147);transform-origin:2.00px 0;">Design Studio Pro</div>
<div class="a t" style="left:1308.70px;top:980.75px;font-family:'Liberation Sans', sans-serif;font-size:29px;line-height:29px;font-weight:400;color:#fafafa;transform:scaleX(1.0161);transform-origin:1.00px 0;">Stainless Steel Water Bottle</div>
<div class="a t" style="left:1979.34px;top:980.75px;font-family:'Liberation Sans', sans-serif;font-size:29px;line-height:29px;font-weight:400;color:#fafafa;transform:scaleX(1.0243);transform-origin:2.00px 0;">1</div>
<div class="a" style="left:2190px;top:972px;width:182px;height:42px;border:2px solid #262626;border-radius:21px;box-sizing:border-box;"></div>
<svg class="a" style="left:2200px;top:977.3px;" width="32" height="32" viewBox="0 0 24 24" fill="#fb2c36" stroke="#0a0a0a" stroke-width="2" stroke-linecap="round" stroke-linejoin="round"><circle cx="12" cy="12" r="10"/><path d="m15 9-6 6"/><path d="m9 9 6 6"/></svg>
<div class="a t" style="left:2240.50px;top:980.04px;font-family:'Liberation Sans', sans-serif;font-size:25px;line-height:25px;font-weight:400;color:#a1a1a1;transform:scaleX(1.0341);transform-origin:1.00px 0;-webkit-text-stroke:0.4px #a1a1a1;">Cancelled</div>
<div class="a t" style="left:2565.00px;top:980.75px;font-family:'Liberation Sans', sans-serif;font-size:29px;line-height:29px;font-weight:400;color:#fafafa;transform:scaleX(1.0780);transform-origin:0.00px 0;">$34.99</div>
<div class="a t" style="left:2946.00px;top:980.75px;font-family:'Liberation Sans', sans-serif;font-size:29px;line-height:29px;font-weight:400;color:#fafafa;transform:scaleX(1.0218);transform-origin:0.00px 0;">Jan 14, 2026</div>
<svg class="a" style="left:3342px;top:979px;" width="32" height="32" viewBox="0 0 24 24" fill="none" stroke="#fafafa" stroke-width="2" stroke-linecap="round" stroke-linejoin="round"><circle cx="12" cy="12" r="1"/><circle cx="19" cy="12" r="1"/><circle cx="5" cy="12" r="1"/></svg>
<div class="a" style="left:386px;top:1043px;width:3052px;height:2px;background:#262626;box-sizing:border-box;"></div>
<div class="a" style="left:442px;top:1081px;width:32px;height:32px;background:#171717;border:4px solid #262626;border-radius:8px;box-sizing:border-box;"></div>
<div class="a t" style="left:529.70px;top:1083.37px;font-family:'Liberation Mono', monospace;font-size:26px;line-height:26px;font-weight:400;color:#fafafa;transform:scaleX(0.9321);transform-origin:0.00px 0;">#25a4b530</div>
<div class="a t" style="left:902.30px;top:1078.75px;font-family:'Liberation Sans', sans-serif;font-size:29px;line-height:29px;font-weight:400;color:#fafafa;transform:scaleX(1.0289);transform-origin:1.00px 0;">Coffee Corner Cafe</div>
<div class="a t" style="left:1307.70px;top:1078.75px;font-family:'Liberation Sans', sans-serif;font-size:29px;line-height:29px;font-weight:400;color:#fafafa;transform:scaleX(1.0161);transform-origin:2.00px 0;">Professional Desk Lamp</div>
<div class="a t" style="left:1979.83px;top:1078.75px;font-family:'Liberation Sans', sans-serif;font-size:29px;line-height:29px;font-weight:400;color:#fafafa;transform:scaleX(1.0243);transform-origin:1.00px 0;">3</div>
<div class="a" style="left:2190px;top:1070px;width:182px;height:42px;border:2px solid #262626;border-radius:21px;box-sizing:border-box;"></div>
<svg class="a" style="left:2200px;top:1075.3px;" width="32" height="32" viewBox="0 0 24 24" fill="#fb2c36" stroke="#0a0a0a" stroke-width="2" stroke-linecap="round" stroke-linejoin="round"><circle cx="12" cy="12" r="10"/><path d="m15 9-6 6"/><path d="m9 9 6 6"/></svg>
<div class="a t" style="left:2240.50px;top:1078.04px;font-family:'Liberation Sans', sans-serif;font-size:25px;line-height:25px;font-weight:400;color:#a1a1a1;transform:scaleX(1.0341);transform-origin:1.00px 0;-webkit-text-stroke:0.4px #a1a1a1;">Cancelled</div>
<div class="a t" style="left:2565.00px;top:1078.75px;font-family:'Liberation Sans', sans-serif;font-size:29px;line-height:29px;font-weight:400;color:#fafafa;transform:scaleX(1.0780);transform-origin:0.00px 0;">$239.97</div>
<div class="a t" style="left:2946.00px;top:1078.75px;font-family:'Liberation Sans', sans-serif;font-size:29px;line-height:29px;font-weight:400;color:#fafafa;transform:scaleX(1.0218);transform-origin:0.00px 0;">Jan 14, 2026</div>
<svg class="a" style="left:3342px;top:1077px;" width="32" height="32" viewBox="0 0 24 24" fill="none" stroke="#fafafa" stroke-width="2" stroke-linecap="round" stroke-linejoin="round"><circle cx="12" cy="12" r="1"/><circle cx="19" cy="12" r="1"/><circle cx="5" cy="12" r="1"/></svg>
<div class="a" style="left:386px;top:1141px;width:3052px;height:2px;background:#262626;box-sizing:border-box;"></div>
<div class="a" style="left:442px;top:1179px;width:32px;height:32px;background:#171717;border:4px solid #262626;border-radius:8px;box-sizing:border-box;"></div>
<div class="a t" style="left:529.70px;top:1181.37px;font-family:'Liberation Mono', monospace;font-size:26px;line-height:26px;font-weight:400;color:#fafafa;transform:scaleX(0.9321);transform-origin:0.00px 0;">#faf07cc5</div>
<div class="a t" style="left:903.30px;top:1176.75px;font-family:'Liberation Sans', sans-serif;font-size:29px;line-height:29px;font-weight:400;color:#fafafa;transform:scaleX(1.0161);transform-origin:0.00px 0;">Alexandra Williams</div>
<div class="a t" style="left:1307.70px;top:1176.75px;font-family:'Liberation Sans', sans-serif;font-size:29px;line-height:29px;font-weight:400;color:#fafafa;transform:scaleX(1.0161);transform-origin:2.00px 0;">USB-C Hub 7-in-1</div>
<div class="a t" style="left:1979.83px;top:1176.75px;font-family:'Liberation Sans', sans-serif;font-size:29px;line-height:29px;font-weight:400;color:#fafafa;transform:scaleX(1.0243);transform-origin:1.00px 0;">3</div>
<div class="a" style="left:2190px;top:1168px;width:194px;height:42px;border:2px solid #262626;border-radius:21px;box-sizing:border-box;"></div>
<svg class="a" style="left:2200px;top:1173.3px;" width="32" height="32" viewBox="0 0 24 24" fill="#00c950" stroke="#0a0a0a" stroke-width="2" stroke-linecap="round" stroke-linejoin="round"><circle cx="12" cy="12" r="10"/><path d="m9 12 2 2 4-4"/></svg>
<div class="a t" style="left:2240.50px;top:1176.04px;font-family:'Liberation Sans', sans-serif;font-size:25px;line-height:25px;font-weight:400;color:#a1a1a1;transform:scaleX(1.0328);transform-origin:1.00px 0;-webkit-text-stroke:0.4px #a1a1a1;">Completed</div>
<div class="a t" style="left:2565.00px;top:1176.75px;font-family:'Liberation Sans', sans-serif;font-size:29px;line-height:29px;font-weight:400;color:#fafafa;transform:scaleX(1.0780);transform-origin:0.00px 0;">$209.97</div>
<div class="a t" style="left:2946.00px;top:1176.75px;font-family:'Liberation Sans', sans-serif;font-size:29px;line-height:29px;font-weight:400;color:#fafafa;transform:scaleX(1.0218);transform-origin:0.00px 0;">Jan 13, 2026</div>
<svg class="a" style="left:3342px;top:1175px;" width="32" height="32" viewBox="0 0 24 24" fill="none" stroke="#fafafa" stroke-width="2" stroke-linecap="round" stroke-linejoin="round"><circle cx="12" cy="12" r="1"/><circle cx="19" cy="12" r="1"/><circle cx="5" cy="12" r="1"/></svg>
<div class="a" style="left:386px;top:1239px;width:3052px;height:2px;background:#262626;box-sizing:border-box;"></div>
<div class="a" style="left:442px;top:1277px;width:32px;height:32px;background:#171717;border:4px solid #262626;border-radius:8px;box-sizing:border-box;"></div>
<div class="a t" style="left:529.70px;top:1279.37px;font-family:'Liberation Mono', monospace;font-size:26px;line-height:26px;font-weight:400;color:#fafafa;transform:scaleX(0.9321);transform-origin:0.00px 0;">#afc0156d</div>
<div class="a t" style="left:901.30px;top:1274.75px;font-family:'Liberation Sans', sans-serif;font-size:29px;line-height:29px;font-weight:400;color:#fafafa;transform:scaleX(1.0161);transform-origin:2.00px 0;">David Thompson</div>
<div class="a t" style="left:1307.70px;top:1274.75px;font-family:'Liberation Sans', sans-serif;font-size:29px;line-height:29px;font-weight:400;color:#fafafa;transform:scaleX(1.0161);transform-origin:2.00px 0;">Ergonomic Office Chair</div>
<div class="a t" style="left:1979.34px;top:1274.75px;font-family:'Liberation Sans', sans-serif;font-size:29px;line-height:29px;font-weight:400;color:#fafafa;transform:scaleX(1.0243);transform-origin:2.00px 0;">1</div>
<div class="a" style="left:2190px;top:1266px;width:189px;height:42px;border:2px solid #262626;border-radius:21px;box-sizing:border-box;"></div>
<svg class="a" style="left:2200px;top:1271.3px;" width="32" height="32" viewBox="0 0 24 24" fill="#00c950" stroke="#0a0a0a" stroke-width="2" stroke-linecap="round" stroke-linejoin="round"><circle cx="12" cy="12" r="10"/><path d="m9 12 2 2 4-4"/></svg>
<div class="a t" style="left:2240.50px;top:1274.04px;font-family:'Liberation Sans', sans-serif;font-size:25px;line-height:25px;font-weight:400;color:#a1a1a1;transform:scaleX(1.0501);transform-origin:1.00px 0;-webkit-text-stroke:0.4px #a1a1a1;">Confirmed</div>
<div class="a t" style="left:2565.00px;top:1274.75px;font-family:'Liberation Sans', sans-serif;font-size:29px;line-height:29px;font-weight:400;color:#fafafa;transform:scaleX(1.0800);transform-origin:0.00px 0;">$399.00</div>
<div class="a t" style="left:2946.00px;top:1274.75px;font-family:'Liberation Sans', sans-serif;font-size:29px;line-height:29px;font-weight:400;color:#fafafa;transform:scaleX(1.0218);transform-origin:0.00px 0;">Jan 12, 2026</div>
<svg class="a" style="left:3342px;top:1273px;" width="32" height="32" viewBox="0 0 24 24" fill="none" stroke="#fafafa" stroke-width="2" stroke-linecap="round" stroke-linejoin="round"><circle cx="12" cy="12" r="1"/><circle cx="19" cy="12" r="1"/><circle cx="5" cy="12" r="1"/></svg>
<div class="a" style="left:386px;top:1337px;width:3052px;height:2px;background:#262626;box-sizing:border-box;"></div>
<div class="a" style="left:386px;top:1339px;width:3052px;height:96px;background:#181818;box-sizing:border-box;"></div>
<div class="a" style="left:442px;top:1375px;width:32px;height:32px;background:#262626;border-radius:8px;box-sizing:border-box;"></div>
<div class="a t" style="left:529.70px;top:1377.37px;font-family:'Liberation Mono', monospace;font-size:26px;line-height:26px;font-weight:400;color:#fafafa;transform:scaleX(0.9321);transform-origin:0.00px 0;">#46025b40</div>
<div class="a t" style="left:901.30px;top:1372.75px;font-family:'Liberation Sans', sans-serif;font-size:29px;line-height:29px;font-weight:400;color:#fafafa;transform:scaleX(1.0161);transform-origin:2.00px 0;">Emily Rodriguez</div>
<div class="a t" style="left:1307.70px;top:1372.75px;font-family:'Liberation Sans', sans-serif;font-size:29px;line-height:29px;font-weight:400;color:#fafafa;transform:scaleX(1.0161);transform-origin:2.00px 0;">Professional Desk Lamp</div>
<div class="a t" style="left:1979.81px;top:1372.75px;font-family:'Liberation Sans', sans-serif;font-size:29px;line-height:29px;font-weight:400;color:#fafafa;transform:scaleX(1.0243);transform-origin:0.00px 0;">4</div>
<div class="a" style="left:2190px;top:1364px;width:189px;height:42px;border:2px solid #262626;border-radius:21px;box-sizing:border-box;"></div>
<svg class="a" style="left:2200px;top:1369.3px;" width="32" height="32" viewBox="0 0 24 24" fill="#00c950" stroke="#0a0a0a" stroke-width="2" stroke-linecap="round" stroke-linejoin="round"><circle cx="12" cy="12" r="10"/><path d="m9 12 2 2 4-4"/></svg>
<div class="a t" style="left:2240.50px;top:1372.04px;font-family:'Liberation Sans', sans-serif;font-size:25px;line-height:25px;font-weight:400;color:#a1a1a1;transform:scaleX(1.0501);transform-origin:1.00px 0;-webkit-text-stroke:0.4px #a1a1a1;">Confirmed</div>
<div class="a t" style="left:2565.00px;top:1372.75px;font-family:'Liberation Sans', sans-serif;font-size:29px;line-height:29px;font-weight:400;color:#fafafa;transform:scaleX(1.0780);transform-origin:0.00px 0;">$319.96</div>
<div class="a t" style="left:2946.00px;top:1372.75px;font-family:'Liberation Sans', sans-serif;font-size:29px;line-height:29px;font-weight:400;color:#fafafa;transform:scaleX(1.0218);transform-origin:0.00px 0;">Jan 12, 2026</div>
<svg class="a" style="left:3342px;top:1371px;" width="32" height="32" viewBox="0 0 24 24" fill="none" stroke="#fafafa" stroke-width="2" stroke-linecap="round" stroke-linejoin="round"><circle cx="12" cy="12" r="1"/><circle cx="19" cy="12" r="1"/><circle cx="5" cy="12" r="1"/></svg>
<div class="a" style="left:386px;top:1435px;width:3052px;height:2px;background:#262626;box-sizing:border-box;"></div>
<div class="a" style="left:442px;top:1473px;width:32px;height:32px;background:#171717;border:4px solid #262626;border-radius:8px;box-sizing:border-box;"></div>
<div class="a t" style="left:529.70px;top:1475.37px;font-family:'Liberation Mono', monospace;font-size:26px;line-height:26px;font-weight:400;color:#fafafa;transform:scaleX(0.9321);transform-origin:0.00px 0;">#13da48c5</div>
<div class="a t" style="left:902.30px;top:1470.75px;font-family:'Liberation Sans', sans-serif;font-size:29px;line-height:29px;font-weight:400;color:#fafafa;transform:scaleX(1.0116);transform-origin:1.00px 0;">Sarah Johnson</div>
<div class="a t" style="left:1308.70px;top:1470.75px;font-family:'Liberation Sans', sans-serif;font-size:29px;line-height:29px;font-weight:400;color:#fafafa;transform:scaleX(1.0161);transform-origin:1.00px 0;">Smart Watch Series X</div>
<div class="a t" style="left:1979.83px;top:1470.75px;font-family:'Liberation Sans', sans-serif;font-size:29px;line-height:29px;font-weight:400;color:#fafafa;transform:scaleX(1.0243);transform-origin:1.00px 0;">2</div>
<div class="a" style="left:2190px;top:1462px;width:194px;height:42px;border:2px solid #262626;border-radius:21px;box-sizing:border-box;"></div>
<svg class="a" style="left:2200px;top:1467.3px;" width="32" height="32" viewBox="0 0 24 24" fill="#00c950" stroke="#0a0a0a" stroke-width="2" stroke-linecap="round" stroke-linejoin="round"><circle cx="12" cy="12" r="10"/><path d="m9 12 2 2 4-4"/></svg>
<div class="a t" style="left:2240.50px;top:1470.04px;font-family:'Liberation Sans', sans-serif;font-size:25px;line-height:25px;font-weight:400;color:#a1a1a1;transform:scaleX(1.0328);transform-origin:1.00px 0;-webkit-text-stroke:0.4px #a1a1a1;">Completed</div>
<div class="a t" style="left:2565.00px;top:1470.75px;font-family:'Liberation Sans', sans-serif;font-size:29px;line-height:29px;font-weight:400;color:#fafafa;transform:scaleX(1.0780);transform-origin:0.00px 0;">$898.00</div>
<div class="a t" style="left:2946.00px;top:1470.75px;font-family:'Liberation Sans', sans-serif;font-size:29px;line-height:29px;font-weight:400;color:#fafafa;transform:scaleX(1.0218);transform-origin:0.00px 0;">Jan 12, 2026</div>
<svg class="a" style="left:3342px;top:1469px;" width="32" height="32" viewBox="0 0 24 24" fill="none" stroke="#fafafa" stroke-width="2" stroke-linecap="round" stroke-linejoin="round"><circle cx="12" cy="12" r="1"/><circle cx="19" cy="12" r="1"/><circle cx="5" cy="12" r="1"/></svg>
<div class="a" style="left:386px;top:1533px;width:3052px;height:2px;background:#262626;box-sizing:border-box;"></div>
<div class="a" style="left:442px;top:1571px;width:32px;height:32px;background:#171717;border:4px solid #262626;border-radius:8px;box-sizing:border-box;"></div>
<div class="a t" style="left:529.70px;top:1573.37px;font-family:'Liberation Mono', monospace;font-size:26px;line-height:26px;font-weight:400;color:#fafafa;transform:scaleX(0.9321);transform-origin:0.00px 0;">#bb051a17</div>
<div class="a t" style="left:901.30px;top:1568.75px;font-family:'Liberation Sans', sans-serif;font-size:29px;line-height:29px;font-weight:400;color:#fafafa;transform:scaleX(1.0161);transform-origin:2.00px 0;">David Thompson</div>
<div class="a t" style="left:1309.70px;top:1568.75px;font-family:'Liberation Sans', sans-serif;font-size:29px;line-height:29px;font-weight:400;color:#fafafa;transform:scaleX(1.0161);transform-origin:0.00px 0;">Yoga Mat Premium</div>
<div class="a t" style="left:1979.34px;top:1568.75px;font-family:'Liberation Sans', sans-serif;font-size:29px;line-height:29px;font-weight:400;color:#fafafa;transform:scaleX(1.0243);transform-origin:2.00px 0;">1</div>
<div class="a" style="left:2190px;top:1560px;width:189px;height:42px;border:2px solid #262626;border-radius:21px;box-sizing:border-box;"></div>
<svg class="a" style="left:2200px;top:1565.3px;" width="32" height="32" viewBox="0 0 24 24" fill="#00c950" stroke="#0a0a0a" stroke-width="2" stroke-linecap="round" stroke-linejoin="round"><circle cx="12" cy="12" r="10"/><path d="m9 12 2 2 4-4"/></svg>
<div class="a t" style="left:2240.50px;top:1568.04px;font-family:'Liberation Sans', sans-serif;font-size:25px;line-height:25px;font-weight:400;color:#a1a1a1;transform:scaleX(1.0501);transform-origin:1.00px 0;-webkit-text-stroke:0.4px #a1a1a1;">Confirmed</div>
<div class="a t" style="left:2565.00px;top:1568.75px;font-family:'Liberation Sans', sans-serif;font-size:29px;line-height:29px;font-weight:400;color:#fafafa;transform:scaleX(1.0734);transform-origin:0.00px 0;">$59.99</div>
<div class="a t" style="left:2946.00px;top:1568.75px;font-family:'Liberation Sans', sans-serif;font-size:29px;line-height:29px;font-weight:400;color:#fafafa;transform:scaleX(1.0218);transform-origin:0.00px 0;">Jan 12, 2026</div>
<svg class="a" style="left:3342px;top:1567px;" width="32" height="32" viewBox="0 0 24 24" fill="none" stroke="#fafafa" stroke-width="2" stroke-linecap="round" stroke-linejoin="round"><circle cx="12" cy="12" r="1"/><circle cx="19" cy="12" r="1"/><circle cx="5" cy="12" r="1"/></svg>
<div class="a" style="left:386px;top:1631px;width:3052px;height:2px;background:#262626;box-sizing:border-box;"></div>
<div class="a" style="left:442px;top:1669px;width:32px;height:32px;background:#171717;border:4px solid #262626;border-radius:8px;box-sizing:border-box;"></div>
<div class="a t" style="left:529.70px;top:1671.37px;font-family:'Liberation Mono', monospace;font-size:26px;line-height:26px;font-weight:400;color:#fafafa;transform:scaleX(0.9321);transform-origin:0.00px 0;">#e6c31c75</div>
<div class="a t" style="left:901.30px;top:1666.75px;font-family:'Liberation Sans', sans-serif;font-size:29px;line-height:29px;font-weight:400;color:#fafafa;transform:scaleX(1.0161);transform-origin:2.00px 0;">Marketing Masters LLC</div>
<div class="a t" style="left:1309.70px;top:1666.75px;font-family:'Liberation Sans', sans-serif;font-size:29px;line-height:29px;font-weight:400;color:#fafafa;transform:scaleX(1.0161);transform-origin:0.00px 0;">Yoga Mat Premium</div>
<div class="a t" style="left:1979.83px;top:1666.75px;font-family:'Liberation Sans', sans-serif;font-size:29px;line-height:29px;font-weight:400;color:#fafafa;transform:scaleX(1.0243);transform-origin:1.00px 0;">2</div>
<div class="a" style="left:2190px;top:1658px;width:182px;height:42px;border:2px solid #262626;border-radius:21px;box-sizing:border-box;"></div>
<svg class="a" style="left:2200px;top:1663.3px;" width="32" height="32" viewBox="0 0 24 24" fill="#fb2c36" stroke="#0a0a0a" stroke-width="2" stroke-linecap="round" stroke-linejoin="round"><circle cx="12" cy="12" r="10"/><path d="m15 9-6 6"/><path d="m9 9 6 6"/></svg>
<div class="a t" style="left:2240.50px;top:1666.04px;font-family:'Liberation Sans', sans-serif;font-size:25px;line-height:25px;font-weight:400;color:#a1a1a1;transform:scaleX(1.0341);transform-origin:1.00px 0;-webkit-text-stroke:0.4px #a1a1a1;">Cancelled</div>
<div class="a t" style="left:2565.00px;top:1666.75px;font-family:'Liberation Sans', sans-serif;font-size:29px;line-height:29px;font-weight:400;color:#fafafa;transform:scaleX(0.9867);transform-origin:0.00px 0;">$119.98</div>
<div class="a t" style="left:2946.00px;top:1666.75px;font-family:'Liberation Sans', sans-serif;font-size:29px;line-height:29px;font-weight:400;color:#fafafa;transform:scaleX(1.0218);transform-origin:0.00px 0;">Jan 12, 2026</div>
<svg class="a" style="left:3342px;top:1665px;" width="32" height="32" viewBox="0 0 24 24" fill="none" stroke="#fafafa" stroke-width="2" stroke-linecap="round" stroke-linejoin="round"><circle cx="12" cy="12" r="1"/><circle cx="19" cy="12" r="1"/><circle cx="5" cy="12" r="1"/></svg>
<div class="a" style="left:386px;top:1729px;width:3052px;height:2px;background:#262626;box-sizing:border-box;"></div>
<div class="a" style="left:442px;top:1767px;width:32px;height:32px;background:#171717;border:4px solid #262626;border-radius:8px;box-sizing:border-box;"></div>
<div class="a t" style="left:529.70px;top:1769.37px;font-family:'Liberation Mono', monospace;font-size:26px;line-height:26px;font-weight:400;color:#fafafa;transform:scaleX(0.9321);transform-origin:0.00px 0;">#df71b0b7</div>
<div class="a t" style="left:903.30px;top:1764.75px;font-family:'Liberation Sans', sans-serif;font-size:29px;line-height:29px;font-weight:400;color:#fafafa;transform:scaleX(1.0161);transform-origin:0.00px 0;">Yuki Tanaka</div>
<div class="a t" style="left:1309.70px;top:1764.75px;font-family:'Liberation Sans', sans-serif;font-size:29px;line-height:29px;font-weight:400;color:#fafafa;transform:scaleX(1.0161);transform-origin:0.00px 0;">Wireless Charging Pad</div>
<div class="a t" style="left:1979.83px;top:1764.75px;font-family:'Liberation Sans', sans-serif;font-size:29px;line-height:29px;font-weight:400;color:#fafafa;transform:scaleX(1.0243);transform-origin:1.00px 0;">2</div>
<div class="a" style="left:2190px;top:1756px;width:182px;height:42px;border:2px solid #262626;border-radius:21px;box-sizing:border-box;"></div>
<svg class="a" style="left:2200px;top:1761.3px;" width="32" height="32" viewBox="0 0 24 24" fill="#fb2c36" stroke="#0a0a0a" stroke-width="2" stroke-linecap="round" stroke-linejoin="round"><circle cx="12" cy="12" r="10"/><path d="m15 9-6 6"/><path d="m9 9 6 6"/></svg>
<div class="a t" style="left:2240.50px;top:1764.04px;font-family:'Liberation Sans', sans-serif;font-size:25px;line-height:25px;font-weight:400;color:#a1a1a1;transform:scaleX(1.0341);transform-origin:1.00px 0;-webkit-text-stroke:0.4px #a1a1a1;">Cancelled</div>
<div class="a t" style="left:2565.00px;top:1764.75px;font-family:'Liberation Sans', sans-serif;font-size:29px;line-height:29px;font-weight:400;color:#fafafa;transform:scaleX(1.0814);transform-origin:0.00px 0;">$99.98</div>
<div class="a t" style="left:2946.00px;top:1764.75px;font-family:'Liberation Sans', sans-serif;font-size:29px;line-height:29px;font-weight:400;color:#fafafa;transform:scaleX(0.9975);transform-origin:0.00px 0;">Jan 11, 2026</div>
<svg class="a" style="left:3342px;top:1763px;" width="32" height="32" viewBox="0 0 24 24" fill="none" stroke="#fafafa" stroke-width="2" stroke-linecap="round" stroke-linejoin="round"><circle cx="12" cy="12" r="1"/><circle cx="19" cy="12" r="1"/><circle cx="5" cy="12" r="1"/></svg>
<div class="a" style="left:386px;top:1827px;width:3052px;height:2px;background:#262626;box-sizing:border-box;"></div>
<div class="a" style="left:386px;top:1843px;width:3052px;height:2px;background:#262626;box-sizing:border-box;"></div>
<div class="a" style="left:435px;top:1868px;width:127px;height:71px;background:#0a0a0a;border:2px solid #303030;border-radius:16px;box-sizing:border-box;"></div>
<div class="a t" style="left:460.00px;top:1888.85px;font-family:'Liberation Sans', sans-serif;font-size:29px;line-height:29px;font-weight:400;color:#fafafa;transform:scaleX(1.0243);transform-origin:1.00px 0;width:27.3px;overflow:hidden;">20</div>
<svg class="a" style="left:503px;top:1888px;" width="32" height="32" viewBox="0 0 24 24" fill="none" stroke="#737373" stroke-width="2" stroke-linecap="round" stroke-linejoin="round"><path d="m7 15 5 5 5-5"/><path d="m7 9 5-5 5 5"/></svg>
<div class="a t" style="left:577.80px;top:1889.45px;font-family:'Liberation Sans', sans-serif;font-size:29px;line-height:29px;font-weight:400;color:#fafafa;transform:scaleX(1.0433);transform-origin:1.00px 0;-webkit-text-stroke:0.5px #fafafa;">rows per page</div>
<div class="a t" style="left:785.70px;top:1892.84px;font-family:'Liberation Sans', sans-serif;font-size:25px;line-height:25px;font-weight:400;color:#a1a1a1;transform:scaleX(1.0412);transform-origin:1.00px 0;">(993 entries)</div>
<div class="a t" style="left:2887.00px;top:1889.85px;font-family:'Liberation Sans', sans-serif;font-size:29px;line-height:29px;font-weight:400;color:#fafafa;transform:scaleX(1.0041);transform-origin:2.00px 0;-webkit-text-stroke:0.5px #fafafa;">Page 1 of 50</div>
<div class="a" style="left:3086px;top:1872px;width:64px;height:64px;background:#0e0e0e;border:2px solid #222222;border-radius:16px;box-sizing:border-box;"></div>
<svg class="a" style="left:3102px;top:1888px;" width="32" height="32" viewBox="0 0 24 24" fill="none" stroke="#6f6f6f" stroke-width="2" stroke-linecap="round" stroke-linejoin="round"><path d="m11 17-5-5 5-5"/><path d="m18 17-5-5 5-5"/></svg>
<div class="a" style="left:3166px;top:1872px;width:64px;height:64px;background:#0e0e0e;border:2px solid #222222;border-radius:16px;box-sizing:border-box;"></div>
<svg class="a" style="left:3182px;top:1888px;" width="32" height="32" viewBox="0 0 24 24" fill="none" stroke="#6f6f6f" stroke-width="2" stroke-linecap="round" stroke-linejoin="round"><path d="m15 18-6-6 6-6"/></svg>
<div class="a" style="left:3246px;top:1872px;width:64px;height:64px;background:#171717;border:2px solid #303030;border-radius:16px;box-sizing:border-box;"></div>
<svg class="a" style="left:3262px;top:1888px;" width="32" height="32" viewBox="0 0 24 24" fill="none" stroke="#fafafa" stroke-width="2" stroke-linecap="round" stroke-linejoin="round"><path d="m9 18 6-6-6-6"/></svg>
<div class="a" style="left:3326px;top:1872px;width:64px;height:64px;background:#171717;border:2px solid #303030;border-radius:16px;box-sizing:border-box;"></div>
<svg class="a" style="left:3342px;top:1888px;" width="32" height="32" viewBox="0 0 24 24" fill="none" stroke="#fafafa" stroke-width="2" stroke-linecap="round" stroke-linejoin="round"><path d="m6 17 5-5-5-5"/><path d="m13 17 5-5-5-5"/></svg>
<div class="a" style="left:3422px;top:132px;width:14px;height:1383px;background:#262626;border-radius:7px;box-sizing:border-box;"></div>
<div class="a" style="left:384px;top:14px;width:3056px;height:1952px;border:2px solid #262626;border-radius:28px;box-sizing:border-box;"></div>
<div class="a" style="left:0px;top:1940px;width:1187px;height:42px;background:#1f1f1f;box-sizing:border-box;border-top-right-radius:8px;border-top:1px solid #0b0b0b;"></div>
<div class="a t" style="left:10.30px;top:1948.84px;font-family:'Liberation Sans', sans-serif;font-size:25px;line-height:25px;font-weight:400;color:#d4d4d4;transform:scaleX(1.0558);transform-origin:1.00px 0;">localhost:3000/dashboard/the-john-doe-company/orders/e6c31c75-6fcd-457b-9985-e79fbdd65e19</div>
<svg class="a" style="left:0;top:1974px" width="8" height="8" viewBox="0 0 8 8"><path d="M0 0 L0 8 L8 8 A8 8 0 0 1 0 0 Z" fill="#000"/></svg>
</body></html>
